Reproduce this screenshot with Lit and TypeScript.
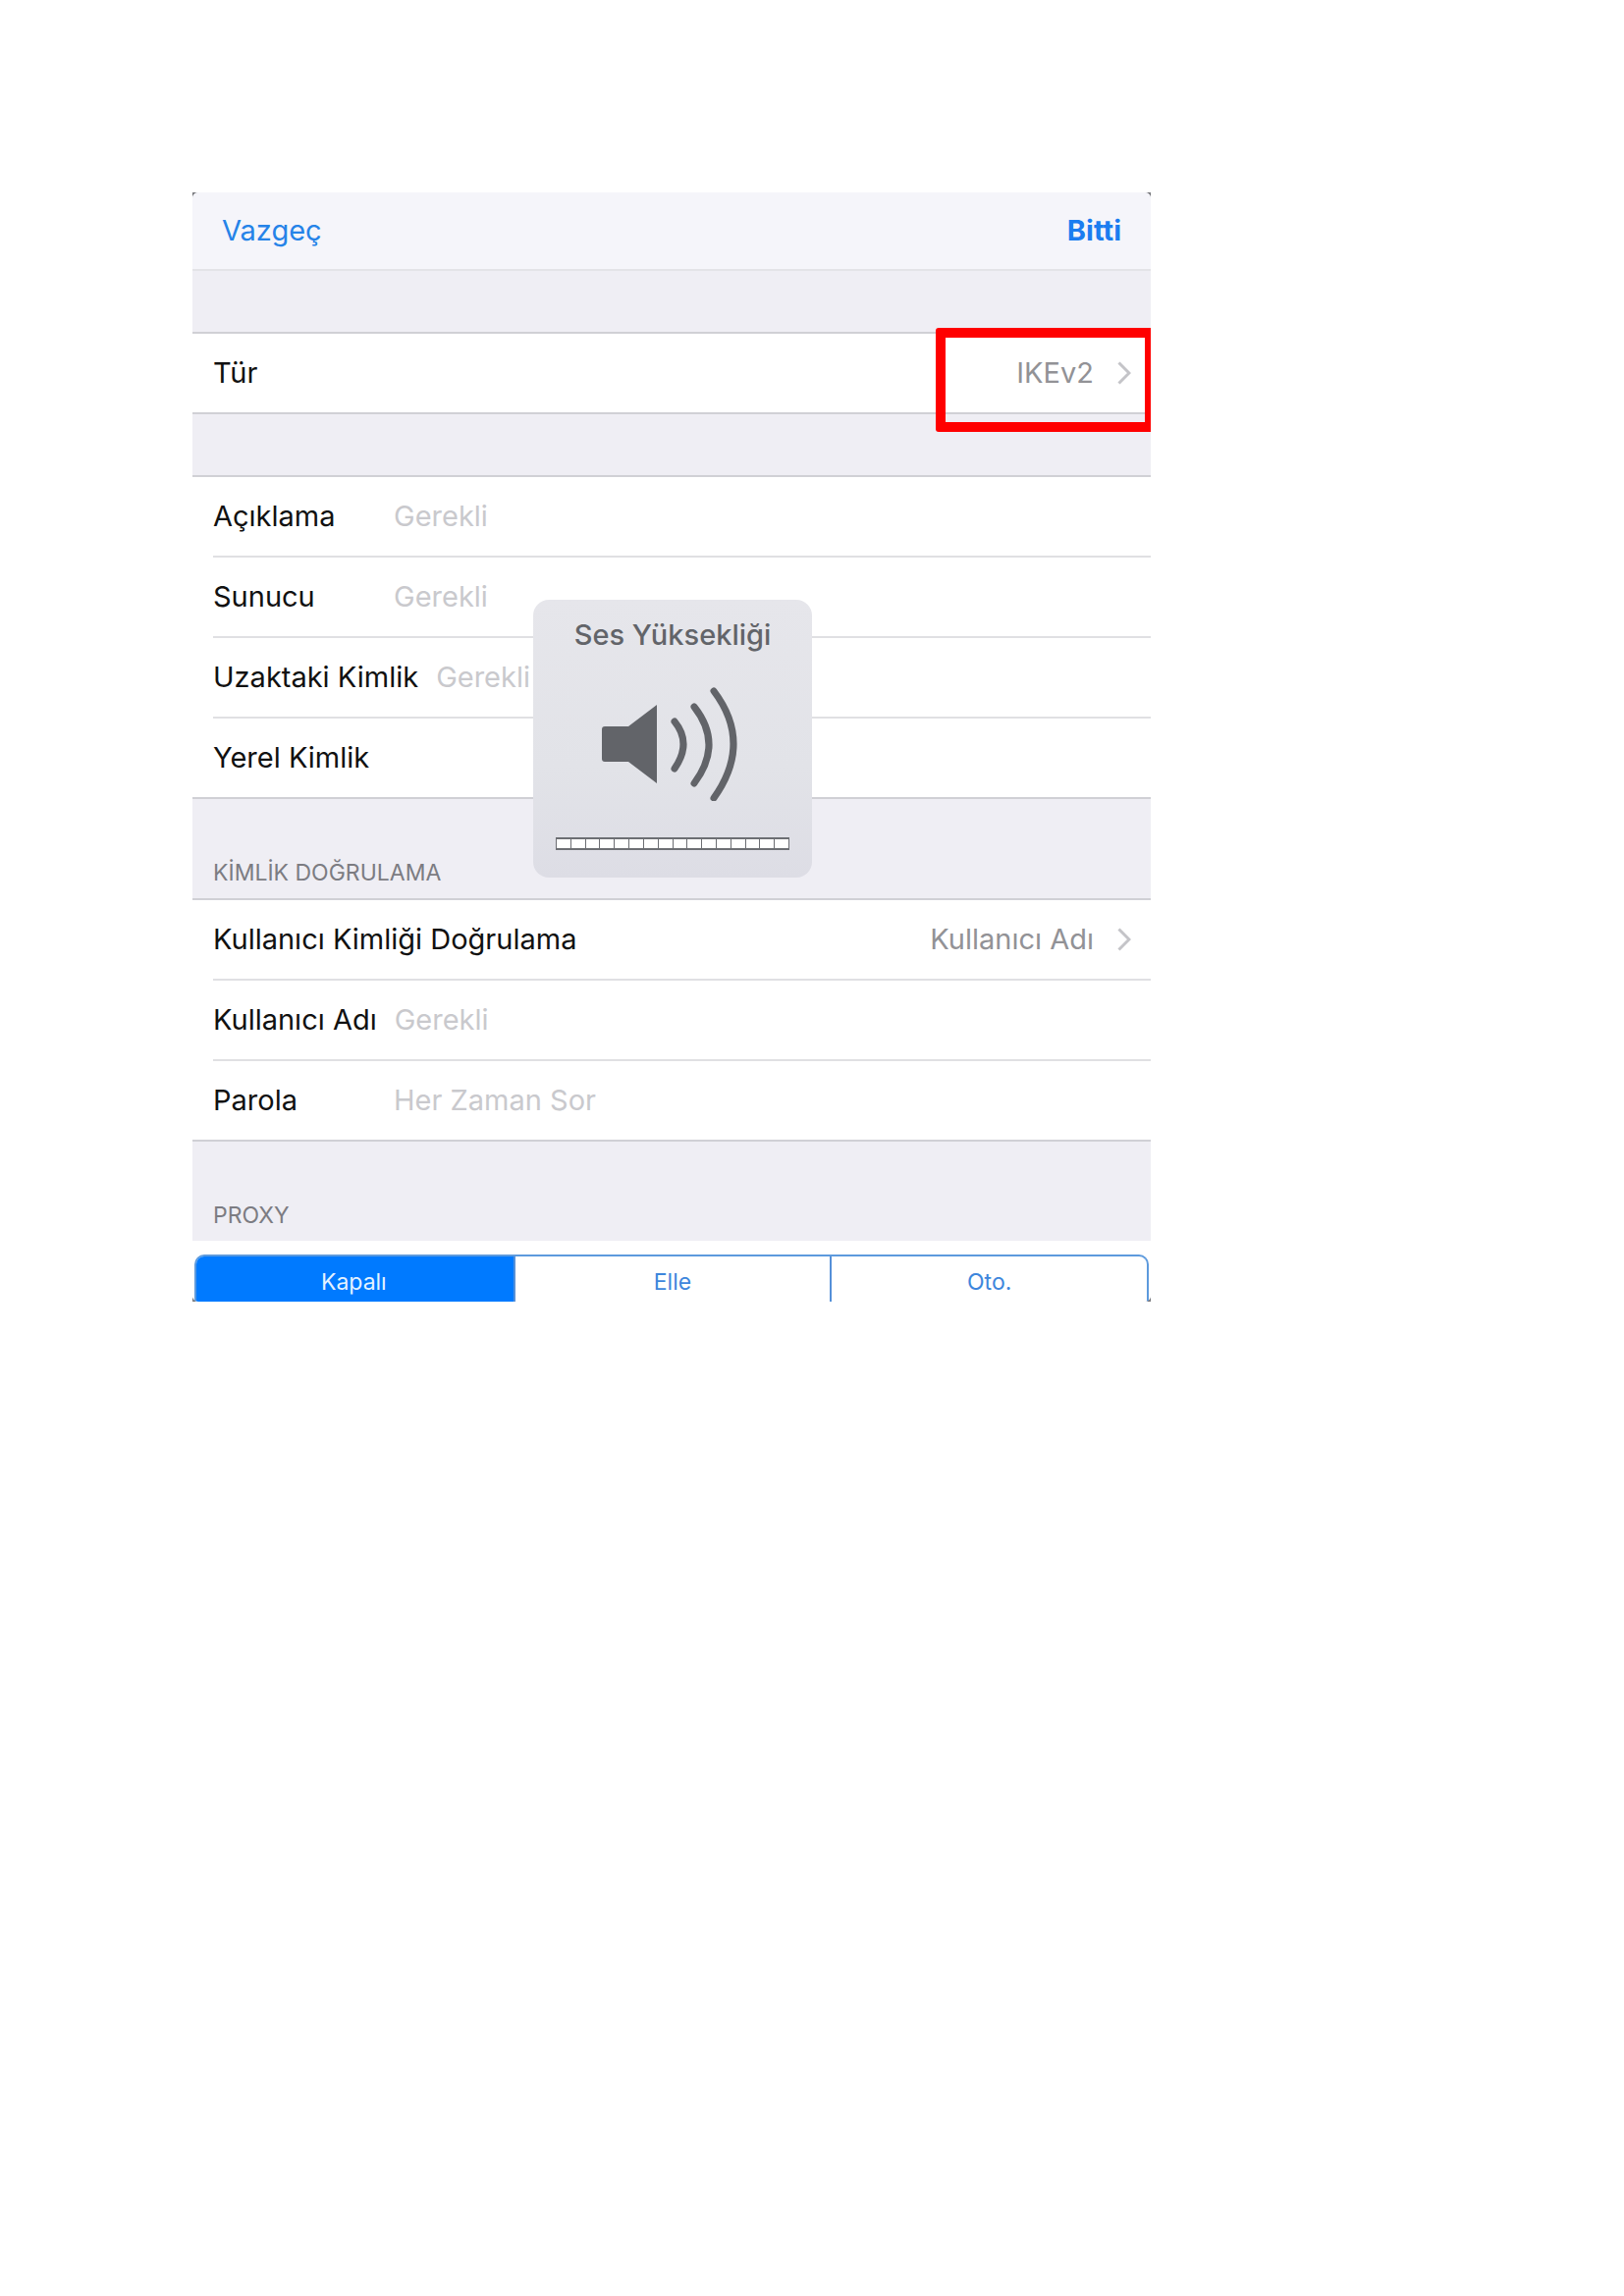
import { LitElement, html, css, nothing } from "lit";
import { customElement, property, state } from "lit/decorators.js";

const fontStack = css`Inter, Roboto, "Liberation Sans", sans-serif`;

@customElement("vpn-field")
class VpnField extends LitElement {
  @property() label = "";
  @property() hint = "";
  @property() kind = "text";

  static styles = css`
    :host {
      display: block;
    }
    .field {
      display: flex;
      align-items: center;
      gap: 18px;
      min-height: 80px;
      font: 400 29px/40px ${fontStack};
    }
    .label {
      flex: none;
      min-width: 166px;
      color: #111;
      white-space: nowrap;
    }
    .input {
      flex: 1;
      min-width: 0;
      padding: 0;
      border: 0;
      outline: 0;
      background: transparent;
      color: #111;
      font: inherit;
    }
    .input::placeholder {
      color: #c9c9cd;
      opacity: 1;
    }
  `;

  render() {
    return html`<div class="field">
      <label class="label" for="box">${this.label}</label>
      <input class="input" id="box" type=${this.kind} placeholder=${this.hint || nothing} />
    </div>`;
  }
}

@customElement("vpn-choice")
class VpnChoice extends LitElement {
  @property() label = "";
  @property() value = "";

  static styles = css`
    :host {
      display: block;
    }
    .choice {
      display: flex;
      align-items: center;
      width: 100%;
      min-height: 80px;
      padding: 0 20px 0 0;
      border: 0;
      background: transparent;
      color: #111;
      font: 400 29px/40px ${fontStack};
      text-align: left;
    }
    .name {
      flex: 1;
    }
    .value {
      color: #929296;
    }
    .chevron {
      width: 14px;
      height: 24px;
      margin-left: 24px;
      fill: none;
      stroke: #c4c4c8;
      stroke-width: 3;
    }
  `;

  render() {
    return html`<button class="choice" type="button">
      <span class="name">${this.label}</span>
      <span class="value">${this.value}</span>
      <svg class="chevron" viewBox="0 0 14 24" aria-hidden="true"><path d="M1.5 1.5 12 12 1.5 22.5" /></svg>
    </button>`;
  }
}

@customElement("volume-hud")
class VolumeHud extends LitElement {
  static styles = css`
    :host {
      display: block;
    }
    .hud {
      display: flex;
      flex-direction: column;
      align-items: center;
      box-sizing: border-box;
      width: 284px;
      height: 283px;
      padding: 16px 22px 28px;
      border-radius: 16px;
      background: linear-gradient(#e6e6eb, #e2e3e8 60%, #dddde5);
      color: #626469;
    }
    .title {
      font: 500 29px/40px ${fontStack};
      white-space: nowrap;
    }
    .speaker {
      width: 144px;
      height: 116px;
      margin-top: 33px;
      fill: currentColor;
    }
    .wave {
      fill: none;
      stroke: currentColor;
      stroke-width: 7;
      stroke-linecap: round;
    }
    .level {
      display: grid;
      grid-template-columns: repeat(16, 1fr);
      gap: 1px;
      box-sizing: border-box;
      width: 238px;
      height: 13px;
      margin-top: auto;
      padding: 2px 1px;
      background: #6c6e73;
    }
    .cell {
      background: #fff;
    }
  `;

  render() {
    return html`<div class="hud">
      <div class="title">Ses Yüksekliği</div>
      <svg class="speaker" viewBox="0 0 144 116" aria-hidden="true">
        <path d="M3 40H27L56 18V98L27 76H3Q0 76 0 73V43Q0 40 3 40Z" />
        <path class="wave" d="M74 35Q92 57 74 83" />
        <path class="wave" d="M94 20Q124 58 94 98" />
        <path class="wave" d="M114 4Q154 57 114 113" />
      </svg>
      <div class="level">${Array.from({ length: 16 }, () => html`<span class="cell"></span>`)}</div>
    </div>`;
  }
}

@customElement("app-root")
class AppRoot extends LitElement {
  @state() private proxy = "Kapalı";

  static styles = css`
    :host {
      display: block;
      padding: 196px;
      background: #fff;
      font-family: ${fontStack};
    }
    .frame {
      max-width: 976px;
      background: #77787c;
    }
    .panel {
      position: relative;
      overflow: hidden;
      border-radius: 6px;
      background: #efeef4;
    }
    .bar {
      display: flex;
      justify-content: space-between;
      align-items: center;
      box-sizing: border-box;
      height: 80px;
      padding: 0 30px;
      border-bottom: 2px solid #e3e3e7;
      background: #f5f5fa;
    }
    .action {
      padding: 0;
      border: 0;
      background: transparent;
      color: #2583e8;
      font: 400 29px/40px ${fontStack};
    }
    .done {
      color: #1b7df0;
      font-weight: 700;
    }
    .group {
      position: relative;
      padding-left: 21px;
      border-top: 2px solid #d0d0d5;
      border-bottom: 2px solid #d0d0d5;
      background: #fff;
    }
    .type {
      margin: 62px 0;
    }
    .row + .row {
      border-top: 2px solid #e0e0e3;
    }
    .caption {
      box-sizing: border-box;
      height: 101px;
      margin: 0;
      padding: 59px 21px 0;
      color: #7c7c82;
      font: 400 23px/32px ${fontStack};
    }
    .mark {
      position: absolute;
      top: -6px;
      right: 0;
      box-sizing: border-box;
      width: 219px;
      height: 106px;
      border: 10px solid #f00;
      border-right-width: 6px;
      border-radius: 3px 0 0 3px;
      pointer-events: none;
    }
    .hud {
      position: absolute;
      top: 415px;
      left: 50%;
      margin-left: -141px;
    }
    .proxy {
      padding: 14px 2px 0;
      background: #fff;
    }
    .segments {
      display: grid;
      grid-template-columns: repeat(3, 1fr);
      height: 48px;
      box-sizing: border-box;
      margin: 0;
      padding: 0;
      overflow: hidden;
      border: 2px solid #5d9add;
      border-bottom: 0;
      border-radius: 10px 10px 0 0;
    }
    .segment {
      display: flex;
      justify-content: center;
      padding-top: 10px;
      color: #3d86dc;
      font: 400 23px/32px ${fontStack};
    }
    .segment + .segment {
      border-left: 2px solid #5590d8;
    }
    .segment:has(:checked) {
      margin: -2px 0 0 -2px;
      padding-top: 12px;
      background: #007aff;
      color: #e4f2ff;
    }
    .radio {
      position: absolute;
      opacity: 0;
      pointer-events: none;
    }
  `;

  render() {
    return html`<main class="frame">
      <form class="panel">
        <header class="bar">
          <button class="action" type="button">Vazgeç</button>
          <button class="action done" type="button">Bitti</button>
        </header>

        <section class="group type">
          <vpn-choice label="Tür" value="IKEv2"></vpn-choice>
          <div class="mark"></div>
        </section>

        <section class="group">
          <vpn-field class="row" label="Açıklama" hint="Gerekli"></vpn-field>
          <vpn-field class="row" label="Sunucu" hint="Gerekli"></vpn-field>
          <vpn-field class="row" label="Uzaktaki Kimlik" hint="Gerekli"></vpn-field>
          <vpn-field class="row" label="Yerel Kimlik"></vpn-field>
        </section>

        <h2 class="caption">KİMLİK DOĞRULAMA</h2>
        <section class="group">
          <vpn-choice class="row" label="Kullanıcı Kimliği Doğrulama" value="Kullanıcı Adı"></vpn-choice>
          <vpn-field class="row" label="Kullanıcı Adı" hint="Gerekli"></vpn-field>
          <vpn-field class="row" label="Parola" hint="Her Zaman Sor" kind="password"></vpn-field>
        </section>

        <h2 class="caption">PROXY</h2>
        <div class="proxy">
          <div class="segments" role="radiogroup">
            ${["Kapalı", "Elle", "Oto."].map(
              (name) => html`<label class="segment">
                <input
                  class="radio"
                  type="radio"
                  name="proxy"
                  .checked=${this.proxy === name}
                  @change=${() => (this.proxy = name)}
                />${name}
              </label>`,
            )}
          </div>
        </div>

        <volume-hud class="hud"></volume-hud>
      </form>
    </main>`;
  }
}
